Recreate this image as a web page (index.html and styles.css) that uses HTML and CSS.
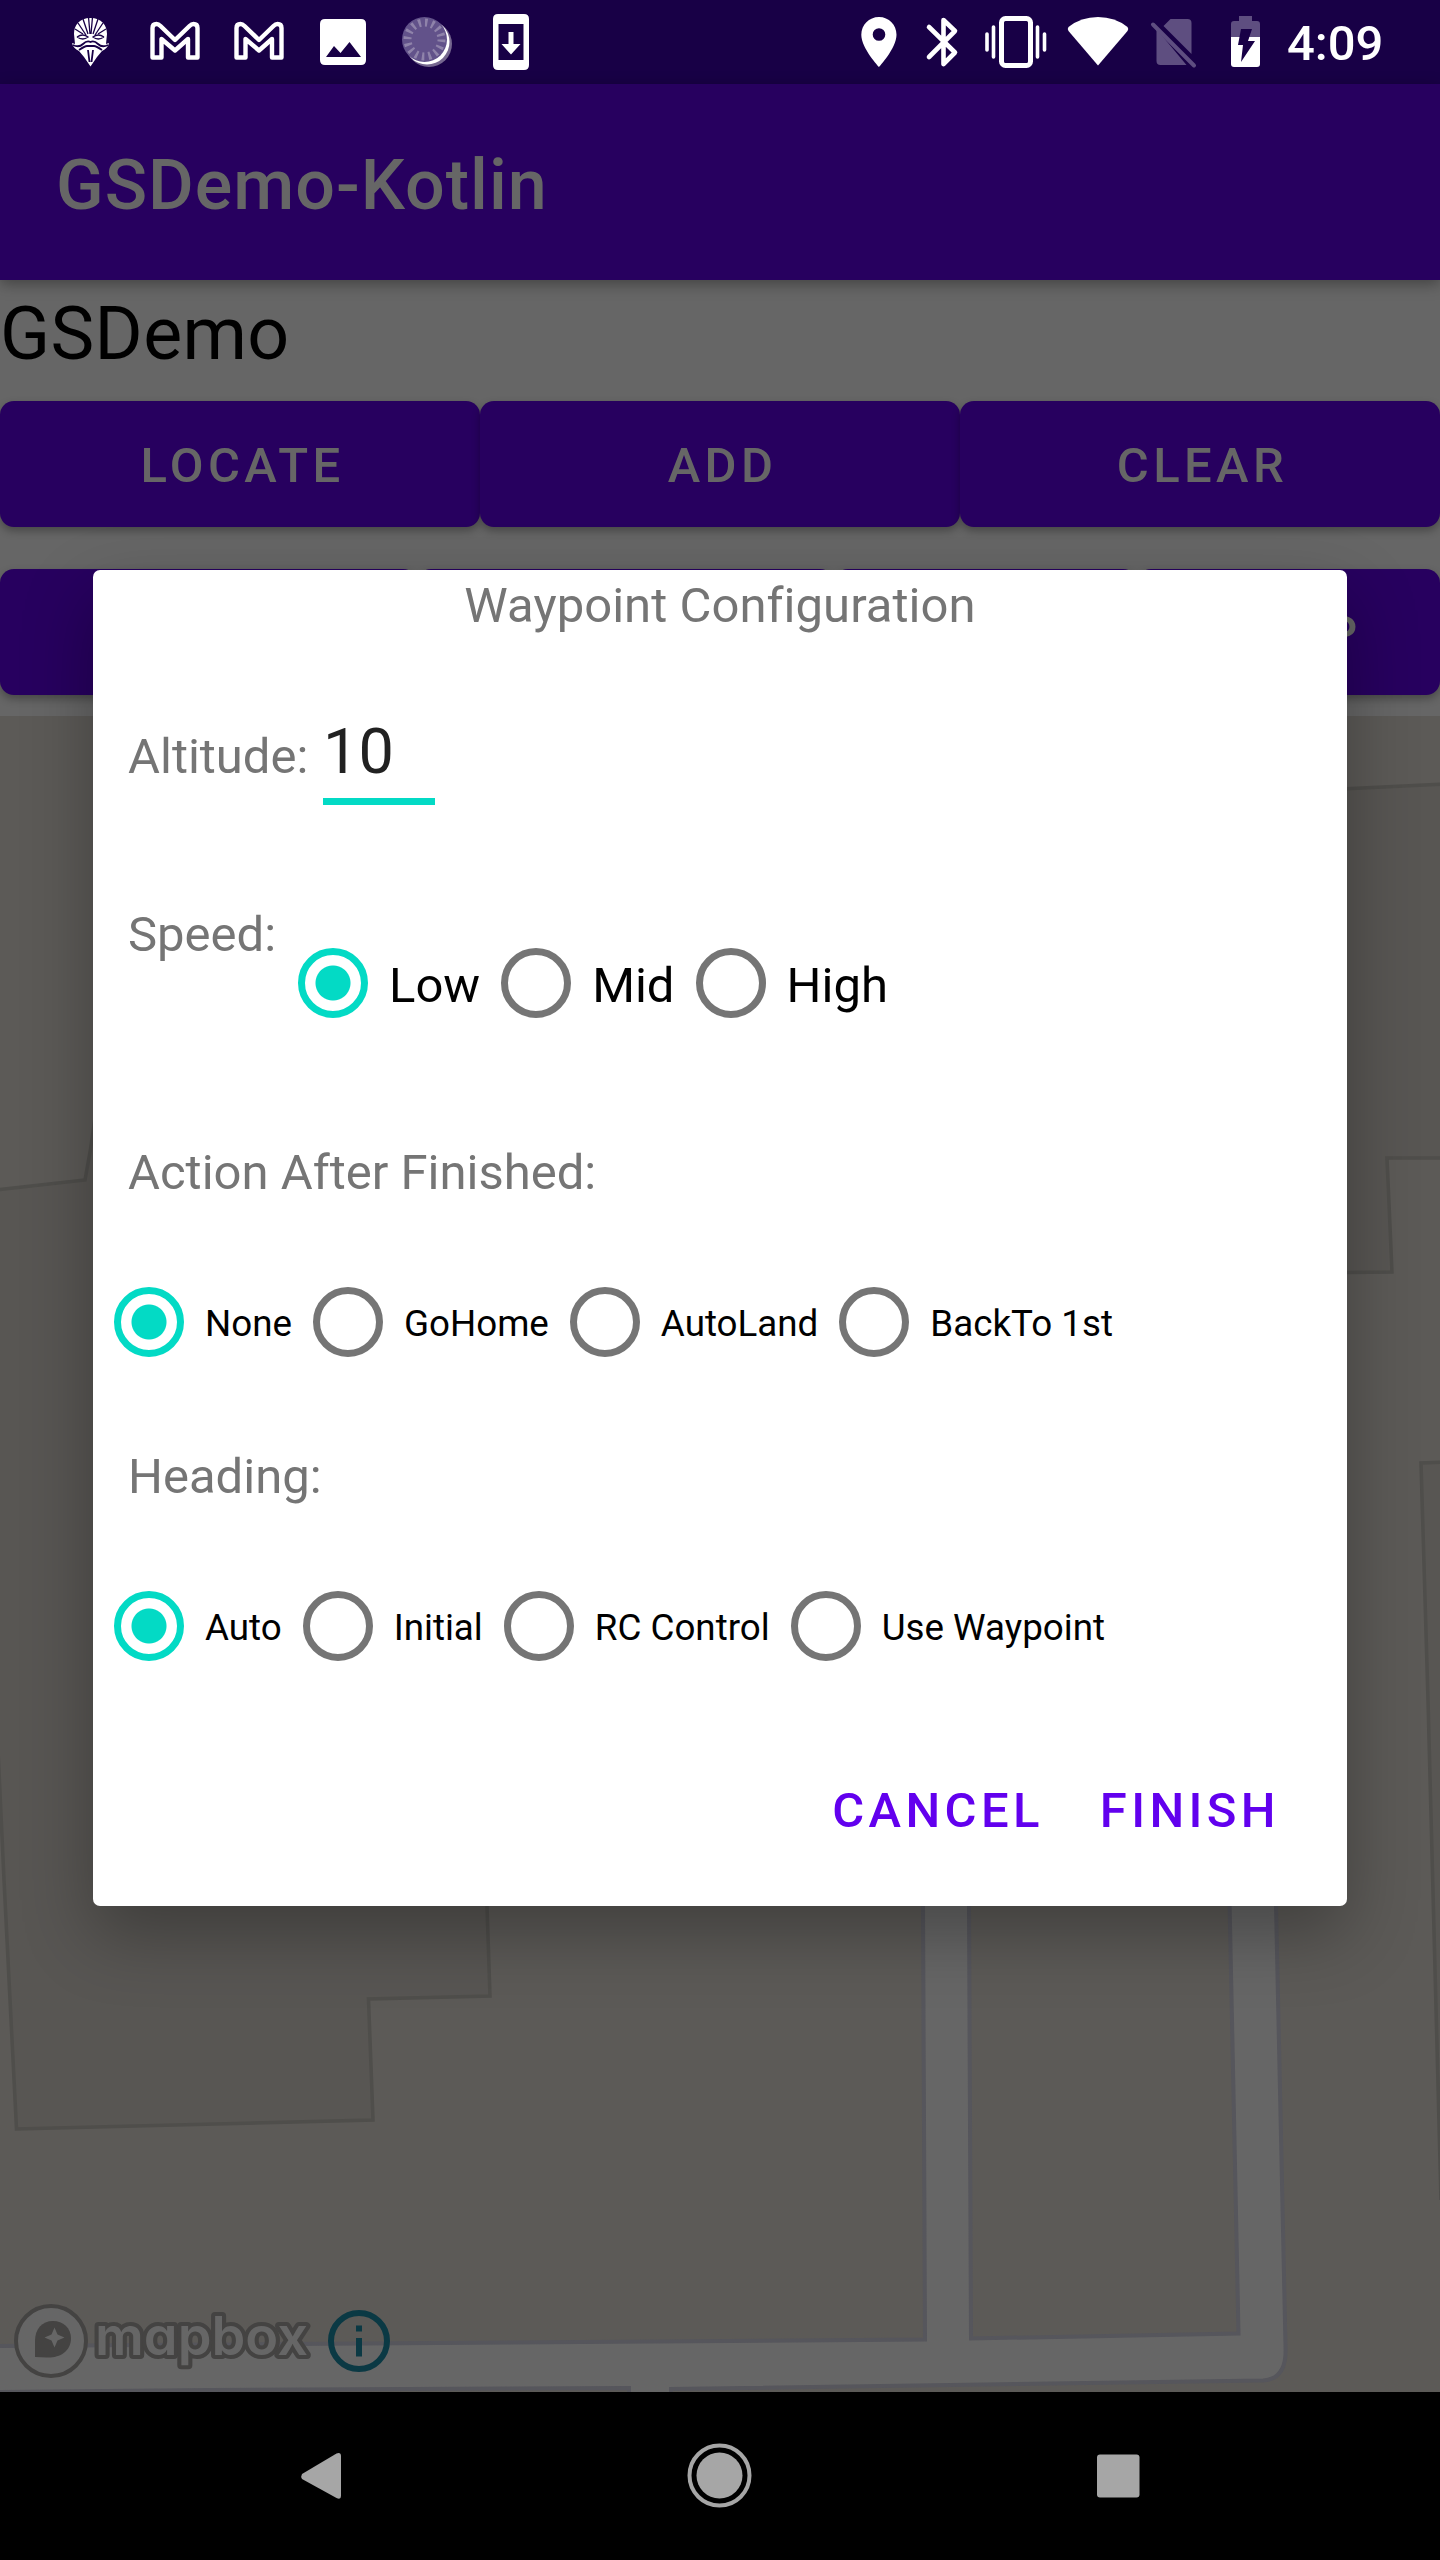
FILE: index.html
```html
<!DOCTYPE html>
<html lang="en">
<head>
<meta charset="utf-8">
<title>GSDemo-Kotlin</title>
<link rel="stylesheet" href="styles.css">
</head>
<body>
<div class="screen">
  <header class="status">
    <svg class="status-icons" viewBox="0 0 1260 84" width="1260" height="84">
      <!-- mask -->
      <g>
        <path fill="#fff" d="M90.500 18c-11 0-16.500 7-16.500 16l1 10-3-1c1 4 3 6 7 8l5 6 6.500 9.500L97 57l5-6c4-2 6-4 7-8l-3 1 1-10c0-9-5.500-16-16.500-16z"/>
        <g fill="none" stroke="#180046" stroke-width="1.300">
          <path d="M88.500 17l1.500 17M92.500 17L91 34M83 19l5 15M98 19l-5 15M78 23l8 12M103 23l-8 12M75 29l8 5M106 29l-8 5"/>
          <path d="M77 37q6-4 11 0-5 4-11 0M104 37q-6-4-11 0 5 4 11 0"/>
          <path stroke-width="1.800" d="M73 45q6 3 10-1 4-4 7.500-2 3.500-2 7.500 2 4 4 10 1M79 50q6-4 8-4h7q2 0 8 4M88 50l1.500 12M93 50l-1.500 12"/>
        </g>
      </g>
      <g fill="none" stroke="#fff" stroke-width="4.400" stroke-linejoin="round">
        <path d="M152.500 57.500V28q0-4 4-4 2 0 4 2l14.500 14 14.500-14q2-2 4-2 4 0 4 4v29.500h-9.500V39L175 50.500 161.500 39v18.500z"/>
        <path d="M236.500 57.500V28q0-4 4-4 2 0 4 2l14.500 14 14.500-14q2-2 4-2 4 0 4 4v29.500h-9.500V39L259 50.500 245.500 39v18.500z"/>
      </g>
      <path fill="#fff" fill-rule="evenodd" d="M325 19h36q5 0 5 5v36q0 5-5 5h-36q-5 0-5-5V24q0-5 5-5zM326 57h35L349.500 42l-9 11-6.500-7z"/>
      <circle cx="429" cy="44" r="23" fill="#75668f"/>
      <circle cx="427" cy="42" r="22.500" fill="#fff"/>
      <circle cx="424.500" cy="39.500" r="22.500" fill="#62528a"/>
      <circle cx="424.500" cy="39.500" r="17" fill="none" stroke="#8f83aa" stroke-width="8" stroke-dasharray="2.500 4.176"/>
      <path fill="#fff" fill-rule="evenodd" d="M498 14h26q5 0 5 5v46q0 5-5 5h-26q-5 0-5-5V19q0-5 5-5zM498.500 24v36h25V24zM508.500 32h5v12h7L511 54.500 501.500 44h7z"/>
      <!-- location -->
      <path fill="#fff" fill-rule="evenodd" d="M879 17c-10 0-17.700 8-17.700 17.700C861.300 48 879 67 879 67s17.500-19 17.500-32.300C896.500 25 889 17 879 17zm0 11.200a6.300 6.300 0 1 1 0 12.600 6.300 6.300 0 0 1 0-12.600z"/>
      <path fill="none" stroke="#fff" stroke-width="4.600" stroke-linejoin="round" stroke-linecap="round" d="M929 27l26 25.500-11.500 11.500V20L955 31 929 57"/>
      <g fill="none" stroke="#fff"><rect x="1001.500" y="18.500" width="29" height="47" rx="4" stroke-width="5"/><path stroke-width="3.600" stroke-linecap="round" d="M993.500 27v30M1037.500 27v30M987 34v16M1044.500 34v16"/></g>
      <path fill="#fff" d="M1068.500 27Q1081 17 1098 17t29.500 10q1.500 2 0 4L1098 65.500 1068.500 31q-1.500-2 0-4z"/>
      <g fill="#5e4e80"><path d="M1170.500 19h17q4 0 4 4v31L1163.500 26zM1156.500 29l30 36h-26q-4 0-4-4z"/><path stroke="#5e4e80" stroke-width="4" stroke-linecap="round" d="M1153 24.500l41 41"/></g>
      <path fill="#5e4e80" d="M1239 16h13v5h5q3 0 3 3v13h-29V24q0-3 3-3h5z"/>
      <path fill="#fff" d="M1231 37h29v27q0 3-3 3h-23q-3 0-3-3z"/>
      <path fill="#180046" d="M1241 29h11l-4 12h7l-14 21 2-17h-5z"/>
    </svg>
    <span class="clock">4:09</span>
  </header>
  <div class="appbar">GSDemo-Kotlin</div>
  <main class="content">
    <h1 class="heading">GSDemo</h1>
    <div class="buttons row-a"><button>LOCATE</button><button>ADD</button><button>CLEAR</button></div>
    <div class="buttons row-b"><button></button><button></button><button></button><button>STOP</button></div>
    <div class="map">
      <svg viewBox="0 716 1440 1676" width="1440" height="1676">
        <path fill="#666" d="M923 1880h360l20 512H0v-46l925-6z"/>
        <g fill="#5c5a57" stroke="#56565c" stroke-width="4">
          <path d="M-5 700H923V1905L925 2339.500-5 2346z"/>
          <path d="M969 1700V1905L971 2338.500 1238.500 2333.500 1229.600 1905V1700z"/>
          <path d="M1270 700L1276 1905 1285.600 2350Q1286 2379 1263 2380.500L671 2389V2400H1450V700z"/>
          <path d="M-5 2392L211 2390 629 2388V2400H-5z"/>
        </g>
        <path fill="#5c5a57" d="M0 716h1440v1100H0z"/>
        <g fill="#585653" stroke="#4f4e4b" stroke-width="3.500">
          <path d="M-5 1190L85 1180Q91 1150 95 1118H487V1906L490 1996 368.500 1999 373 2120 16.500 2129 4 1880-2 1750z"/>
          <path d="M1300 791L1445 784V1158H1387L1392 1272 1300 1273z"/>
          <path d="M1445 1462L1421 1463 1428 1700 1441 2200z"/>
        </g>
      </svg>
      <div class="attribution">
        <svg viewBox="0 0 400 90" width="400" height="90">
          <circle cx="51" cy="45" r="35" fill="#666" stroke="#444342" stroke-width="4"/>
          <path fill="#444342" d="M35 61V45C35 33 42 25 53 25c10 0 18 7 18 17 0 14-12 20-24 19.500z"/>
          <path fill="#666" d="M54.500 31.500l3 7 7 3-7 3-3 7-3-7-7-3 7-3z"/>
          <text class="wordmark" x="95" y="59" textLength="213" lengthAdjust="spacingAndGlyphs">mapbox</text>
          <circle cx="359" cy="45" r="28" fill="none" stroke="#0b3944" stroke-width="6"/>
          <path fill="#0b3944" d="M356 29.500h6v6h-6zM356 42h6v18.500h-6z"/>
        </svg>
      </div>
    </div>
  </main>
  <nav class="navbar">
    <svg viewBox="0 0 1440 168" width="1440" height="168" fill="#a6a6a6">
      <path d="M302 82L336.500 61.500Q341 60 341 64V104Q341 108 336.500 106L302 87Q300.500 84.500 302 82z"/>
      <circle cx="719.500" cy="83.500" r="23"/><circle cx="719.500" cy="83.500" r="30" fill="none" stroke="#a6a6a6" stroke-width="4"/>
      <rect x="1097" y="62.500" width="42.500" height="43" rx="3"/>
    </svg>
  </nav>
  <section class="dialog">
    <h2 class="dialog-title">Waypoint Configuration</h2>
    <div class="field altitude"><label>Altitude:</label><span class="input">10</span></div>
    <div class="field speed"><label>Speed:</label>
      <div class="radios"><span class="radio on">Low</span><span class="radio">Mid</span><span class="radio">High</span></div>
    </div>
    <p class="label action">Action After Finished:</p>
    <div class="radios small"><span class="radio on">None</span><span class="radio">GoHome</span><span class="radio">AutoLand</span><span class="radio">BackTo 1st</span></div>
    <p class="label direction">Heading:</p>
    <div class="radios small"><span class="radio on">Auto</span><span class="radio">Initial</span><span class="radio">RC Control</span><span class="radio">Use Waypoint</span></div>
    <div class="actions"><a>CANCEL</a><a>FINISH</a></div>
  </section>
</div>
</body>
</html>
```
FILE: styles.css
```css
*, *::before { box-sizing: border-box; margin: 0; padding: 0; }
body { background: #000; font-family: Roboto, sans-serif; }
.screen { position: relative; width: 1440px; height: 2560px; overflow: hidden; display: flex; flex-direction: column; }
.status { height: 84px; flex: none; background: #180046; display: flex; }
.status-icons { flex: none; }
.clock { color: #fff; font-size: 49px; font-weight: 500; line-height: 88px; padding-left: 27px; }
.appbar { height: 196px; flex: none; background: #27005f; color: #666; font-size: 70px; font-weight: 500; line-height: 202px; letter-spacing: 1px; padding-left: 56px; position: relative; z-index: 1; box-shadow: 0 4px 14px rgba(0, 0, 0, .35); }
.content { height: 2112px; flex: none; background: #666; display: flex; flex-direction: column; }
.heading { height: 121px; font-size: 73.5px; font-weight: 400; line-height: 109px; letter-spacing: .4px; color: #000; }
.buttons { display: grid; height: 126px; }
.row-a { grid-template-columns: repeat(3, 1fr); }
.row-b { grid-template-columns: 417px 417px 303px 303px; margin: 42px 0 21px; }
button { height: 126px; border: 0; border-radius: 14px; background: #27005f; color: #666; font: 500 49px/120px Roboto, sans-serif; letter-spacing: 4.37px; padding: 4px 0 0 5px; box-shadow: 0 4px 8px rgba(0, 0, 0, .3); }
.map { position: relative; height: 1676px; background: #5c5a57; }
.map svg { display: block; }
.attribution { position: absolute; left: 0; bottom: 6px; }
.wordmark { font: 600 53px Inter, sans-serif; font-feature-settings: "cv11"; fill: #666; stroke: #444342; stroke-width: 8px; stroke-linejoin: round; paint-order: stroke; }
.navbar { height: 168px; flex: none; background: #000; }
.navbar svg { display: block; }
.dialog { position: absolute; z-index: 2; left: 93px; top: 570px; width: 1254px; height: 1336px; background: #fff; border-radius: 7px; box-shadow: 0 28px 70px rgba(0, 0, 0, .3); color: #757575; font-size: 49px; display: flex; flex-direction: column; }
.dialog-title { font-size: 49px; font-weight: 400; line-height: 72px; height: 70px; text-align: center; letter-spacing: .04px; }
.field { display: flex; padding-left: 35px; }
.altitude { height: 165px; margin-top: 76px; align-items: flex-start; }
.altitude label { width: 181px; line-height: 82px; }
.input { width: 112px; height: 89px; margin-left: 14px; border-bottom: 7px solid #03dac5; color: #212121; font-size: 63px; line-height: 72px; }
.speed { height: 210px; }
.speed label { width: 149px; line-height: 108px; }
.speed .radios { margin-top: 67px; }
.radios { display: flex; height: 70px; color: #000; }
.radio { display: flex; line-height: 75px; white-space: nowrap; }
.radio::before { content: ""; flex: none; width: 70px; height: 70px; margin: 0 21px; border: 7px solid #757575; border-radius: 50%; }
.radio.on::before { border-color: #03dac5; background: radial-gradient(circle, #03dac5 17px, transparent 18px); }
.small { font-size: 36.75px; }
.small .radio { line-height: 73px; }
.label { padding-left: 35px; line-height: 58px; }
.action { margin: 53px 0 85px; }
.direction { margin: 91px 0 85px; }
.actions { display: flex; justify-content: flex-end; gap: 56px; padding: 121px 67px 0 0; color: #6200ee; font-weight: 500; line-height: 58px; letter-spacing: 4.37px; }
```
